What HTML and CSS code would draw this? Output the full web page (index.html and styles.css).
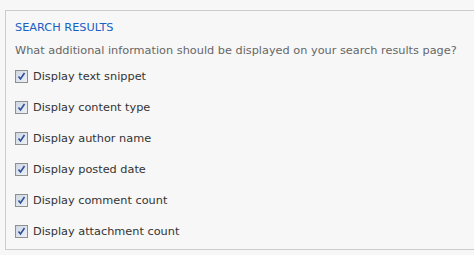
FILE: index.html
```html
<!DOCTYPE html>
<html lang="en">
<head>
  <meta charset="utf-8">
  <title>Search Results</title>
  <link rel="stylesheet" href="styles.css">
</head>
<body>
  <div class="panel">
    <h2 class="panel-title">SEARCH RESULTS</h2>
    <p class="question">What additional information should be displayed on your search results page?</p>
    <ul class="options">
      <li class="option"><span class="check"><svg width="11" height="11" viewBox="0 0 11 11"><path d="M2.5 5.5 L4.5 8 L8.5 2" fill="none" stroke="#2c4f9e" stroke-width="1.6"/></svg></span>Display text snippet</li>
      <li class="option"><span class="check"><svg width="11" height="11" viewBox="0 0 11 11"><path d="M2.5 5.5 L4.5 8 L8.5 2" fill="none" stroke="#2c4f9e" stroke-width="1.6"/></svg></span>Display content type</li>
      <li class="option"><span class="check"><svg width="11" height="11" viewBox="0 0 11 11"><path d="M2.5 5.5 L4.5 8 L8.5 2" fill="none" stroke="#2c4f9e" stroke-width="1.6"/></svg></span>Display author name</li>
      <li class="option"><span class="check"><svg width="11" height="11" viewBox="0 0 11 11"><path d="M2.5 5.5 L4.5 8 L8.5 2" fill="none" stroke="#2c4f9e" stroke-width="1.6"/></svg></span>Display posted date</li>
      <li class="option"><span class="check"><svg width="11" height="11" viewBox="0 0 11 11"><path d="M2.5 5.5 L4.5 8 L8.5 2" fill="none" stroke="#2c4f9e" stroke-width="1.6"/></svg></span>Display comment count</li>
      <li class="option"><span class="check"><svg width="11" height="11" viewBox="0 0 11 11"><path d="M2.5 5.5 L4.5 8 L8.5 2" fill="none" stroke="#2c4f9e" stroke-width="1.6"/></svg></span>Display attachment count</li>
    </ul>
  </div>
</body>
</html>
```

FILE: styles.css
```css
body {
  font-family: "DejaVu Sans", Verdana, sans-serif;
  font-size: 11.3px;
  margin: 0;
  padding: 10px 0 0 5px;
  background-color: #f7f7f7;
  overflow: hidden;
}

.panel {
  width: 469px;
  height: 240px;
  box-sizing: border-box;
  padding: 10px 0 0 9px;
  border: 1px solid #cccccc;
  border-right: none;
  background-color: #f7f7f7;
}

.panel-title {
  margin: 0;
  font-size: 11.3px;
  font-weight: normal;
  line-height: 14px;
  color: #1a5fc4;
}

.question {
  margin: 9px 0 0 0;
  line-height: 14px;
  color: #666666;
}

.options {
  list-style: none;
  margin: 11px 0 0 0;
  padding: 0;
}

.option {
  display: flex;
  align-items: center;
  height: 15px;
  margin-bottom: 16px;
  color: #333333;
}

.check {
  display: flex;
  align-items: center;
  justify-content: center;
  width: 11px;
  height: 11px;
  margin-right: 5px;
  border: 1px solid #8e8f8f;
  background: linear-gradient(135deg, #cfd7e3, #eef1f5);
}
```
